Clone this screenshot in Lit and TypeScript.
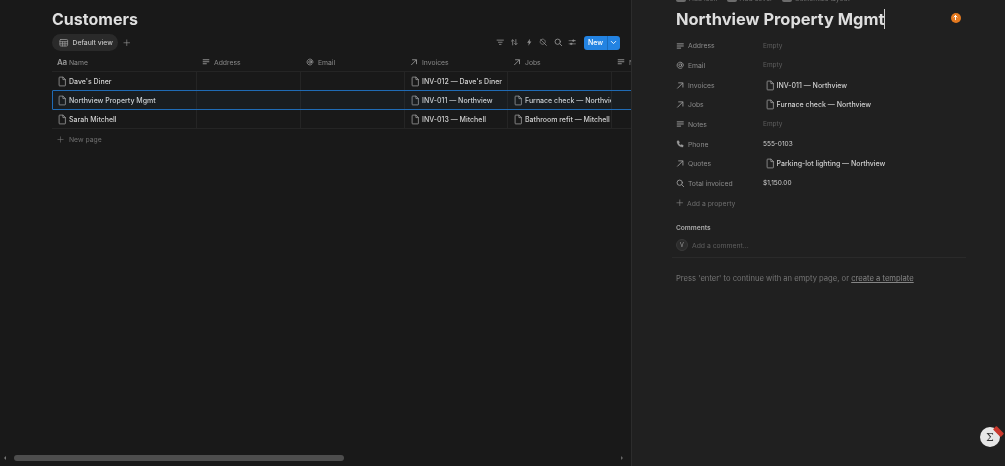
import { LitElement, html, css, svg } from "lit";
import { customElement } from "lit/decorators.js";

const ic = (body: unknown, cls = "ico") => html`<svg class=${cls} viewBox="0 0 16 16" fill="none" stroke="currentColor" stroke-width="1.3" stroke-linecap="round" stroke-linejoin="round">${body}</svg>`;
const doc = () => ic(svg`<path d="M3.200 2c0-.4.3-.7.7-.7h5.300l3.600 3.600v9.100c0 .4-.3.7-.7.7H3.900c-.4 0-.7-.3-.7-.7z" stroke-width="1.100"/><path d="M9 1.500v3.600h3.600" stroke-width="1.100"/>`, "ico doc");
const lines = () => ic(svg`<path d="M1.500 3.500h13M1.500 7.500h13M1.500 11.500h8" stroke-width="1.800" stroke-linecap="butt"/>`);
const arrow = () => ic(svg`<path d="M3 13.500 12.500 4M5 3.500h8v8" stroke-width="1.700"/>`);
const at = () => ic(svg`<circle cx="8" cy="8" r="2.600" stroke-width="1.500"/><path d="M10.600 5.500v3.600c0 1 .7 1.600 1.500 1.600s1.800-.8 1.800-2.700A5.900 5.900 0 1 0 11 13.200" stroke-width="1.500"/>`);
const phone = () => ic(svg`<path fill="currentColor" stroke-width=".6" d="M3 1.800 5.200 1.400l1.500 3.300-1.300 1.200c.7 1.600 2.100 3.100 3.800 3.900l1.200-1.300 3.300 1.500-.4 2.300c-.1.7-.7 1.200-1.400 1.100C6.300 12.800 2.400 8.600 1.700 3.200c-.1-.6.700-1.300 1.300-1.400z"/>`);
const search = () => ic(svg`<circle cx="7" cy="7" r="5" stroke-width="1.700"/><path d="m10.800 10.800 3.700 3.700" stroke-width="1.700"/>`);
const plus = () => ic(svg`<path d="M8 2v12M2 8h12"/>`);

type Row = { name: string; inv: string; job?: string; sel?: boolean };
const rows: Row[] = [
  { name: "Dave's Diner", inv: "INV-012 — Dave's Diner" },
  { name: "Northview Property Mgmt", inv: "INV-011 — Northview", job: "Furnace check — Northvie", sel: true },
  { name: "Sarah Mitchell", inv: "INV-013 — Mitchell", job: "Bathroom refit — Mitchell" },
];

type Prop = { icon: () => unknown; label: string; value?: string; page?: boolean; plain?: boolean };
const props: Prop[] = [
  { icon: lines, label: "Address" },
  { icon: at, label: "Email" },
  { icon: arrow, label: "Invoices", value: "INV-011 — Northview", page: true },
  { icon: arrow, label: "Jobs", value: "Furnace check — Northview", page: true },
  { icon: lines, label: "Notes" },
  { icon: phone, label: "Phone", value: "555-0103", plain: true },
  { icon: arrow, label: "Quotes", value: "Parking-lot lighting — Northview", page: true },
  { icon: search, label: "Total invoiced", value: "$1,150.00", plain: true },
];

@customElement("app-root")
export class AppRoot extends LitElement {
  static styles = css`
    :host { display: block; width: 1005px; height: 466px; overflow: hidden; position: relative; background: #191919;
      font-family: Inter, "Noto Sans", sans-serif; color: #d4d4d4; font-size: 6.800px; }
    .app { display: flex; height: 466px; filter: blur(0.3px); }
    .left { width: 631px; flex: none; display: flex; flex-direction: column; overflow: hidden; background: #191919; }
    .right { flex: 1; min-width: 0; background: #202020; border-left: 1px solid #2c2c2c; display: flex; flex-direction: column; overflow: hidden; }
    .ico { width: 8.500px; height: 8.500px; flex: none; color: #9b9b9b; display: block; }
    .doc { width: 10.500px; height: 11px; color: #a8a8a8; }
    h1 { margin: 0; font-weight: 700; font-size: 16px; line-height: 20px; color: #dfdfdf; padding: 9px 0 0 52px; }
    .bar { display: flex; align-items: center; margin: 5px 0 0 52px; height: 17px; width: 567.500px; }
    .tab { display: flex; align-items: center; gap: 4px; height: 17px; width: 66px; box-sizing: border-box; padding-left: 7px; border-radius: 9px; background: #2a2a2a; color: #c4c4c4; font-weight: 500; white-space: nowrap; }
    .tab .ico { width: 9.500px; height: 9.500px; }
    .addv { margin-left: 5px; color: #8c8c8c; }
    .addv .ico { width: 7.500px; height: 7.500px; }
    .tools { margin-left: auto; display: flex; align-items: center; gap: 6px; }
    .tools > .ico { color: #8f8f8f; }
    .new { display: flex; align-items: center; height: 14px; margin-left: 1px; background: #2383e2; color: #fff; border-radius: 3px; font-weight: 500; font-size: 7px; }
    .new span { padding: 0 3.500px 0 4px; line-height: 14px; border-right: 1px solid #1a6cbc; }
    .new .ico { color: #fff; margin: 0 2.500px; width: 7px; height: 7px; }
    .table { margin: 2px 0 0 52px; width: 620px; }
    .tr { display: grid; grid-template-columns: 145px 104px 104px 103px 104px 60px; height: 19.100px; border-bottom: 1px solid #252525; box-sizing: border-box; position: relative; }
    .cell { display: flex; align-items: center; gap: 1.500px; padding-left: 5px; border-right: 1px solid #252525; white-space: nowrap; overflow: hidden; font-weight: 500; color: #d2d2d2; font-size: 7px; }
    .th .cell { border-right: none; font-weight: 400; color: #8a8a8a; gap: 4px; font-size: 6.800px; }
    .th .ico { width: 8px; height: 8px; }
    .aa { font-size: 8px; font-weight: 600; color: #9b9b9b; width: 8px; line-height: 10px; letter-spacing: -.3px; white-space: nowrap; }
    .selbox { position: absolute; left: 0; top: -1px; right: 40px; bottom: -1px; border: 1px solid #1f6bb5; border-radius: 1px; background: rgba(35,131,226,.035); pointer-events: none; }
    .newpage { display: flex; align-items: center; gap: 5px; margin: 3px 0 0 57px; height: 15px; color: #6f6f6f; }
    .newpage .ico { width: 7px; height: 7px; color: #777; }
    .spacer { flex: 1; }
    .scroll { display: flex; align-items: center; height: 14px; padding: 0 4px; margin-bottom: 1px; gap: 3px; }
    .tri { width: 0; height: 0; border: 2px solid transparent; border-right: 2px solid #777; border-left: 0; }
    .tri.r { border-left: 2px solid #666; border-right: 0; margin-left: auto; margin-right: 4px; }
    .thumb { width: 330px; height: 6px; background: #4d4d4d; border-radius: 3px; margin-left: 5px; }
    .body { margin-top: -7px; padding: 0 0 0 44px; }
    .meta { display: flex; gap: 9px; height: 10px; color: #6c6c6c; align-items: center; }
    .meta i { display: block; width: 10px; height: 6px; background: #6c6c6c; border-radius: 2px; margin-right: 3px; float: left; margin-top: 2px; }
    .title { margin: 4px 0 0; font-size: 16.450px; line-height: 24px; font-weight: 700; color: #dedede; height: 24px; display: flex; align-items: center; }
    .caret { width: 1px; height: 20px; background: #cfcfcf; }
    .props { margin-top: 5px; }
    .pr { display: grid; grid-template-columns: 87px 1fr; height: 19.650px; align-items: center; }
    .pl { display: flex; align-items: center; gap: 3.500px; color: #8b8b8b; }
    .pl .ico { width: 8.500px; height: 8.500px; color: #9a9a9a; }
    .pv { display: flex; align-items: center; gap: 1.500px; font-weight: 500; color: #cfcfcf; font-size: 7px; }
    .pv.e { color: #5e5e5e; font-weight: 400; font-size: 6.500px; }
    .pv.t { font-weight: 400; font-size: 6.500px; color: #d0d0d0; }
    .pv.p { padding-left: 1.500px; }
    .addp { display: flex; align-items: center; gap: 3.500px; height: 20px; color: #6e6e6e; }
    .addp .ico { width: 7.500px; height: 7.500px; color: #888; }
    .chead { margin-top: 10px; font-weight: 600; color: #a9a9a9; line-height: 10px; height: 10px; font-size: 6.600px; }
    .cadd { display: flex; align-items: center; gap: 4px; height: 14px; margin-top: 5px; color: #5f5f5f; }
    .av { width: 12px; height: 12px; border-radius: 50%; background: #2c2c2c; border: 1px solid #383838; box-sizing: border-box; color: #a0a0a0; display: grid; place-items: center; font-size: 5.500px; }
    .hr { height: 1px; background: #2a2a2a; margin: 5px 39px 0 -4px; }
    .hint { margin-top: 15px; color: #747474; font-size: 7.630px; line-height: 12px; white-space: nowrap; }
    .hint u { color: #858585; }
    .dot { position: absolute; left: 950.500px; top: 12.500px; width: 10px; height: 10px; border-radius: 50%; background: #e4791f; display: grid; place-items: center; filter: blur(0.3px); }
    .dot svg { width: 7px; height: 7px; display: block; }
    .help { position: absolute; left: 980px; top: 427px; width: 20px; height: 20px; border-radius: 50%; background: #e6e6e6; color: #333; display: grid; place-items: center; font-size: 11px; font-family: "DejaVu Serif", serif; filter: blur(0.3px); }
    .pen { position: absolute; left: 12.500px; top: 2px; width: 11px; height: 5px; background: #c9372c; transform: rotate(45deg); border-radius: 1px; }
  `;

  render() {
    return html`<div class="app">
      <section class="left">
        <h1>Customers</h1>
        <div class="bar">
          <div class="tab">${ic(svg`<rect x="1.500" y="2.500" width="13" height="11" rx="1.500"/><path d="M1.500 6.200h13M1.500 9.800h13M6 6.200v7.300M10 6.200v7.300"/>`)}Default view</div>
          <span class="addv">${plus()}</span>
          <div class="tools">
            ${ic(svg`<path d="M2 4h12M4.500 8h7M6.500 12h3" stroke-width="1.600"/>`)}
            ${ic(svg`<path d="M5 13V3.500M2.500 6 5 3.500 7.500 6M11 3v9.500M8.500 10l2.500 2.500 2.500-2.500" stroke-width="1.500"/>`)}
            ${ic(svg`<path fill="currentColor" stroke="none" d="M9.500 1.500 4 9h3.200L6.300 14.500 12 6.800H8.700z"/>`)}
            ${ic(svg`<circle cx="7" cy="7" r="4.800" stroke-dasharray="1.500 1.300"/><path d="m10.500 10.500 3.500 3.500M3 3l9 9"/>`)}
            ${search()}
            ${ic(svg`<path d="M2 5h12M2 11h12" /><circle cx="10" cy="5" r="1.500" fill="currentColor"/><circle cx="6" cy="11" r="1.500" fill="currentColor"/>`)}
            <div class="new"><span>New</span>${ic(svg`<path d="m3 5.500 5 5 5-5" stroke-width="2"/>`)}</div>
          </div>
        </div>
        <div class="table">
          <div class="tr th">
            <div class="cell"><span class="aa">Aa</span>Name</div>
            <div class="cell">${lines()}Address</div>
            <div class="cell">${at()}Email</div>
            <div class="cell">${arrow()}Invoices</div>
            <div class="cell">${arrow()}Jobs</div>
            <div class="cell">${lines()}Notes</div>
          </div>
          ${rows.map((r) => html`<div class="tr">
            <div class="cell">${doc()}${r.name}</div>
            <div class="cell"></div>
            <div class="cell"></div>
            <div class="cell">${doc()}${r.inv}</div>
            <div class="cell">${r.job ? html`${doc()}${r.job}` : ""}</div>
            <div class="cell"></div>
            ${r.sel ? html`<div class="selbox"></div>` : ""}
          </div>`)}
        </div>
        <div class="newpage">${plus()}New page</div>
        <div class="spacer"></div>
        <div class="scroll"><span class="tri"></span><div class="thumb"></div><span class="tri r"></span></div>
      </section>
      <section class="right">
        <div class="body">
          <div class="meta"><span><i></i>Add icon</span><span><i></i>Add cover</span><span><i></i>Customize layout</span></div>
          <div class="title">Northview Property Mgmt<span class="caret"></span></div>
          <div class="props">
            ${props.map((p) => html`<div class="pr">
              <div class="pl">${p.icon()}${p.label}</div>
              ${p.value
                ? html`<div class="pv ${p.page ? "p" : "t"}">${p.page ? doc() : ""}${p.value}</div>`
                : html`<div class="pv e">Empty</div>`}
            </div>`)}
          </div>
          <div class="addp">${plus()}Add a property</div>
          <div class="chead">Comments</div>
          <div class="cadd"><span class="av">V</span>Add a comment...</div>
          <div class="hr"></div>
          <div class="hint">Press 'enter' to continue with an empty page, or <u>create a template</u></div>
        </div>
      </section>
    </div>
    <div class="dot">${ic(svg`<path d="M8 13V3.500M4.500 7 8 3.500 11.500 7" stroke="#fff" stroke-width="2.200"/>`, "")}</div>
    <div class="help">Σ<span class="pen"></span></div>`;
  }
}
